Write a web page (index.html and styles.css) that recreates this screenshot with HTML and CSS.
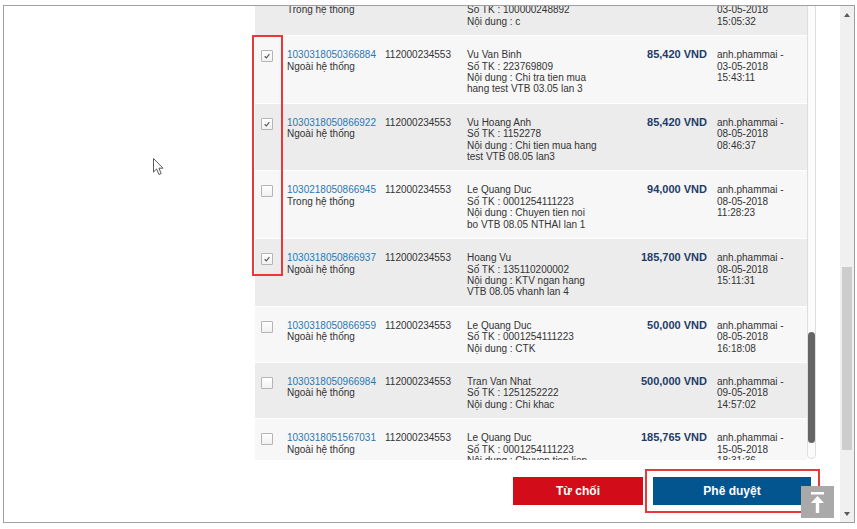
FILE: index.html
```html
<!DOCTYPE html>
<html lang="vi">
<head>
<meta charset="utf-8">
<title>Phê duyệt giao dịch</title>
<link rel="stylesheet" href="styles.css">
</head>
<body>
<div class="frame">
  <div class="page">
    <div class="listbox">
      <div class="viewport">
        <div class="rows">
          <div class="row gray">
            <div class="c-check"><span class="cb"></span></div>
            <div class="c-ref"><a class="link">1030218050366878</a><div>Trong hệ thống</div></div>
            <div class="c-acc">112000234553</div>
            <div class="c-info">Nguyen Van C<br>Số TK : 100000248892<br>Nội dung : c</div>
            <div class="c-amt">20,000 VND</div>
            <div class="c-date">anh.phammai -<br>03-05-2018<br>15:05:32</div>
          </div>
          <div class="row light">
            <div class="c-check"><span class="cb checked"><svg viewBox="0 0 12 12"><path d="M3.2 6.3 L5.2 8.3 L8.9 3.8"/></svg></span></div>
            <div class="c-ref"><a class="link">1030318050366884</a><div>Ngoài hệ thống</div></div>
            <div class="c-acc">112000234553</div>
            <div class="c-info">Vu Van Binh<br>Số TK : 223769809<br>Nội dung : Chi tra tien mua<br>hang test VTB 03.05 lan 3</div>
            <div class="c-amt">85,420 VND</div>
            <div class="c-date">anh.phammai -<br>03-05-2018<br>15:43:11</div>
          </div>
          <div class="row gray">
            <div class="c-check"><span class="cb checked"><svg viewBox="0 0 12 12"><path d="M3.2 6.3 L5.2 8.3 L8.9 3.8"/></svg></span></div>
            <div class="c-ref"><a class="link">1030318050866922</a><div>Ngoài hệ thống</div></div>
            <div class="c-acc">112000234553</div>
            <div class="c-info">Vu Hoang Anh<br>Số TK : 1152278<br>Nội dung : Chi tien mua hang<br>test VTB 08.05 lan3</div>
            <div class="c-amt">85,420 VND</div>
            <div class="c-date">anh.phammai -<br>08-05-2018<br>08:46:37</div>
          </div>
          <div class="row light">
            <div class="c-check"><span class="cb"></span></div>
            <div class="c-ref"><a class="link">1030218050866945</a><div>Trong hệ thống</div></div>
            <div class="c-acc">112000234553</div>
            <div class="c-info">Le Quang Duc<br>Số TK : 0001254111223<br>Nội dung : Chuyen tien noi<br>bo VTB 08.05 NTHAI lan 1</div>
            <div class="c-amt">94,000 VND</div>
            <div class="c-date">anh.phammai -<br>08-05-2018<br>11:28:23</div>
          </div>
          <div class="row gray">
            <div class="c-check"><span class="cb checked"><svg viewBox="0 0 12 12"><path d="M3.2 6.3 L5.2 8.3 L8.9 3.8"/></svg></span></div>
            <div class="c-ref"><a class="link">1030318050866937</a><div>Ngoài hệ thống</div></div>
            <div class="c-acc">112000234553</div>
            <div class="c-info">Hoang Vu<br>Số TK : 135110200002<br>Nội dung : KTV ngan hang<br>VTB 08.05 vhanh lan 4</div>
            <div class="c-amt">185,700 VND</div>
            <div class="c-date">anh.phammai -<br>08-05-2018<br>15:11:31</div>
          </div>
          <div class="row light">
            <div class="c-check"><span class="cb"></span></div>
            <div class="c-ref"><a class="link">1030318050866959</a><div>Ngoài hệ thống</div></div>
            <div class="c-acc">112000234553</div>
            <div class="c-info">Le Quang Duc<br>Số TK : 0001254111223<br>Nội dung : CTK</div>
            <div class="c-amt">50,000 VND</div>
            <div class="c-date">anh.phammai -<br>08-05-2018<br>16:18:08</div>
          </div>
          <div class="row gray">
            <div class="c-check"><span class="cb"></span></div>
            <div class="c-ref"><a class="link">1030318050966984</a><div>Ngoài hệ thống</div></div>
            <div class="c-acc">112000234553</div>
            <div class="c-info">Tran Van Nhat<br>Số TK : 1251252222<br>Nội dung : Chi khac</div>
            <div class="c-amt">500,000 VND</div>
            <div class="c-date">anh.phammai -<br>09-05-2018<br>14:57:02</div>
          </div>
          <div class="row light">
            <div class="c-check"><span class="cb"></span></div>
            <div class="c-ref"><a class="link">1030318051567031</a><div>Ngoài hệ thống</div></div>
            <div class="c-acc">112000234553</div>
            <div class="c-info">Le Quang Duc<br>Số TK : 0001254111223<br>Nội dung : Chuyen tien lien<br>ngan hang</div>
            <div class="c-amt">185,765 VND</div>
            <div class="c-date">anh.phammai -<br>15-05-2018<br>18:31:36</div>
          </div>
        </div>
      </div>
      <div class="vscroll"><div class="vthumb"></div></div>
    </div>
    <div class="actions">
      <button class="btn reject">Từ chối</button>
      <button class="btn approve">Phê duyệt</button>
    </div>

    <div class="mark mark-checks"></div>
    <div class="mark mark-approve"></div>
    <div class="to-top">
      <svg viewBox="0 0 33 32" width="33" height="32">
        <rect x="10" y="6" width="13" height="2.5" fill="#fff"/>
        <polygon points="16.5,10 10,17 14.8,17 14.8,27 18.2,27 18.2,17 23,17" fill="#fff"/>
      </svg>
    </div>
    <svg class="cursor" width="12" height="18" viewBox="0 0 12 18">
      <path d="M0.5 0.5 L0.5 14 L3.6 11 L6 16.5 L8.2 15.5 L5.9 10.2 L10 10.2 Z" fill="#fff" stroke="#5a5a5a" stroke-width="1" stroke-linejoin="round"/>
    </svg>
  </div>
  <div class="oscroll">
    <div class="oarrow"><span class="tri up"></span></div>
    <div class="otrack"><div class="othumb"></div></div>
    <div class="oarrow"><span class="tri down"></span></div>
  </div>
</div>
</body>
</html>
```
FILE: styles.css
```css
* { box-sizing: border-box; }

html, body {
  margin: 0;
  padding: 0;
  background: #fff;
}

body {
  font-family: "Liberation Sans", Arial, sans-serif;
  font-size: 10px;
  color: #333;
  padding: 5px 0 0 3px;
}

.frame {
  width: 852px;
  height: 518px;
  border: 1px solid #a0a0a0;
  display: flex;
  background: #fff;
}

.page {
  position: relative;
  width: 836px;
  display: flex;
  flex-direction: column;
  overflow: hidden;
}

.listbox {
  margin-left: 251px;
  height: 454px;
  display: flex;
}

.viewport {
  width: 552px;
  overflow: hidden;
}

.rows {
  margin-top: -26px;
}

.row {
  display: grid;
  grid-template-columns: 32px 98px 82px 136px 104px 100px;
  padding: 13px 0 8px;
  border-bottom: 1px solid #fff;
  line-height: 11.4px;
}

.row.gray { background: #ececec; }
.row.light { background: #f7f7f7; }

.c-check {
  padding-left: 6px;
  padding-top: 1px;
}

.cb {
  display: block;
  width: 12px;
  height: 12px;
  border: 1px solid #b4b4b4;
  border-radius: 1px;
  background: linear-gradient(#ffffff, #f1f1f1);
}

.cb svg {
  display: block;
  width: 10px;
  height: 10px;
}

.cb svg path {
  fill: none;
  stroke: #555;
  stroke-width: 1.3;
}

.link {
  display: block;
  color: #2878b4;
  text-decoration: none;
}

.c-amt {
  text-align: right;
  font-weight: bold;
  font-size: 11px;
  color: #1e3c6a;
}

.c-date {
  padding-left: 10px;
}

.vscroll {
  position: relative;
  width: 9px;
  height: 453px;
  border: 1px solid #dedede;
  border-top: 0;
  border-radius: 0 0 5px 5px;
  background: #fbfbfb;
}

.vthumb {
  position: absolute;
  left: 0;
  top: 326px;
  width: 7px;
  height: 111px;
  border-radius: 4px;
  background: #656565;
}

.actions {
  display: flex;
  justify-content: flex-end;
  gap: 10px;
  padding-top: 17px;
  padding-right: 29px;
}

.btn {
  height: 28px;
  border: 0;
  color: #fff;
  font-family: "Liberation Sans", Arial, sans-serif;
  font-size: 12px;
  font-weight: bold;
  padding: 0;
}

.btn.reject {
  width: 130px;
  background: #d20d19;
}

.btn.approve {
  width: 158px;
  background: #03558f;
}

.mark {
  position: absolute;
  border: 2px solid #e8383b;
}

.mark-checks {
  left: 248px;
  top: 29px;
  width: 31px;
  height: 241px;
}

.mark-approve {
  left: 641px;
  top: 463px;
  width: 175px;
  height: 44px;
}

.to-top {
  position: absolute;
  left: 797px;
  top: 480px;
  width: 33px;
  height: 32px;
  background: #a9a9a9;
}

.to-top svg { display: block; }

.cursor {
  position: absolute;
  left: 149px;
  top: 152px;
}

.oscroll {
  width: 14px;
  background: #f0f0f0;
  display: flex;
  flex-direction: column;
}

.oarrow {
  height: 17px;
  display: flex;
  align-items: center;
  justify-content: center;
}

.tri {
  width: 0;
  height: 0;
  border-left: 3.5px solid transparent;
  border-right: 3.5px solid transparent;
}

.tri.up { border-bottom: 4px solid #5a5a5a; }
.tri.down { border-top: 4px solid #5a5a5a; }

.otrack {
  position: relative;
  flex: 1;
}

.othumb {
  position: absolute;
  left: 2px;
  top: 244px;
  width: 10px;
  height: 183px;
  background: #cdcdcd;
}
```
